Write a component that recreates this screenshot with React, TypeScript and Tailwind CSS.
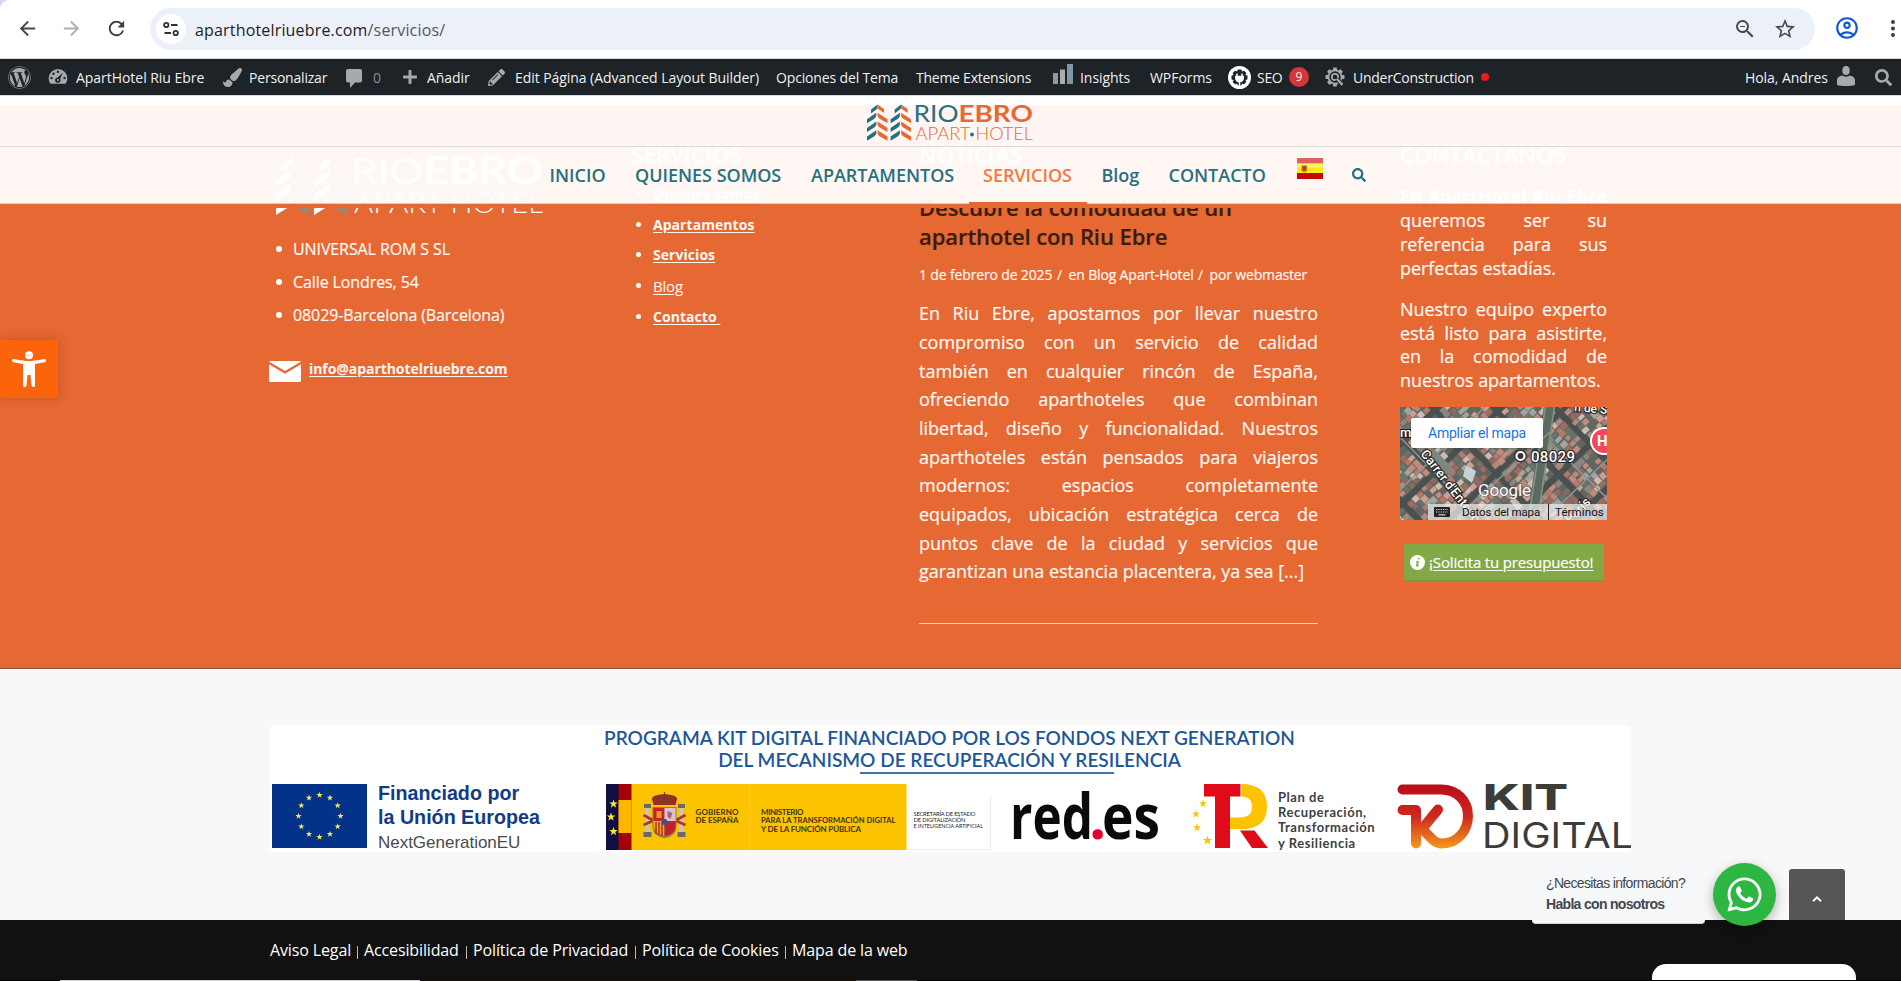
import React from "react";
import { MdArrowBack, MdArrowForward, MdRefresh, MdStarBorder, MdZoomOut, MdOutlineAccountCircle } from "react-icons/md";
import { FaWordpress, FaPaintBrush, FaPlus, FaPencilAlt, FaSearch, FaWhatsapp } from "react-icons/fa";

const SANS = "font-['Open_Sans','Noto_Sans',sans-serif]";

function starPoints(cx: number, cy: number, r: number) {
  return Array.from({ length: 10 }, (_, i) => {
    const a = -Math.PI / 2 + (i * Math.PI) / 5;
    const k = i % 2 ? r * 0.4 : r;
    return `${(cx + k * Math.cos(a)).toFixed(2)},${(cy + k * Math.sin(a)).toFixed(2)}`;
  }).join(" ");
}

function BrowserBar() {
  return (
    <div className="h-[59px] shrink-0 bg-[#cfdcfb]">
      <div className="flex h-full items-start rounded-tl-[9px] border-b border-[#d5d9de] bg-white pt-2 font-['Noto_Sans','Open_Sans',sans-serif]">
        <div className="flex h-[41px] shrink-0 items-center text-[#45484b]">
          <MdArrowBack className="ml-[16px] size-[23px]" />
          <MdArrowForward className="ml-[21px] size-[23px] text-[#aeb1b4]" />
          <MdRefresh className="ml-[22px] size-[23px] text-[#3c3f42]" />
        </div>
        <div className="ml-[22px] flex h-[42px] w-[1665px] shrink-0 items-center rounded-full bg-[#ecf0f9] pl-[6px]">
          <span className="flex size-[30px] items-center justify-center rounded-full bg-white">
            <svg width="18" height="18" viewBox="0 0 18 18" fill="none" stroke="#2f3235" strokeWidth="1.8">
              <circle cx="4.3" cy="5" r="2.2" />
              <path d="M9 5h6.500M2.500 13H9" />
              <circle cx="13.700" cy="13" r="2.200" />
            </svg>
          </span>
          <span className="mt-[1px] ml-[9px] font-['Open_Sans'] text-[16px] tracking-[0.17px] text-[#1f2124]">
            aparthotelriuebre.com<span className="text-[#53565a]">/servicios/</span>
          </span>
          <MdZoomOut className="ml-auto size-[24px] text-[#45484b]" />
          <MdStarBorder className="mr-[18px] ml-[16px] size-[24px] text-[#45484b]" />
        </div>
        <MdOutlineAccountCircle className="mt-[7px] ml-[19px] size-[26px] shrink-0 text-[#0b57d0]" />
        <svg className="mt-[8px] ml-[25px] shrink-0" width="16" height="26" viewBox="0 0 16 26" fill="#3c3f42">
          <circle cx="8" cy="6" r="2" /><circle cx="8" cy="12.500" r="2" /><circle cx="8" cy="19" r="2" />
        </svg>
      </div>
    </div>
  );
}

function Gauge() {
  return (
    <svg width="20" height="18" viewBox="0 0 20 18" className="shrink-0">
      <path d="M10 1a9.300 9.300 0 0 0-9.300 9.300c0 2 .6 3.900 1.700 5.400h15.200a9.300 9.300 0 0 0 1.700-5.400A9.300 9.300 0 0 0 10 1z" fill="#a7aaad" />
      <g fill="#1d2327">
        <circle cx="10" cy="3.800" r="1.200" /><circle cx="5.500" cy="5.700" r="1.200" /><circle cx="3.500" cy="10" r="1.200" /><circle cx="16.500" cy="10" r="1.200" />
        <path d="M15 4.500l-3.300 6.900a2.300 2.300 0 1 1-2.500-1.500z" />
        <circle cx="10" cy="12" r="2.600" />
      </g>
      <circle cx="10" cy="12" r="1.100" fill="#a7aaad" />
    </svg>
  );
}

function Gear({ color, size }: { color: string; size: number }) {
  return (
    <svg width={size} height={size} viewBox="0 0 20 20" className="shrink-0">
      <g fill={color}>
        {[0, 45, 90, 135].map((r) => <rect key={r} x="8" y="0.500" width="4" height="19" rx="0.800" transform={`rotate(${r} 10 10)`} />)}
        <circle cx="10" cy="10" r="7.400" />
      </g>
      <circle cx="10" cy="10" r="5.700" fill="#1d2327" />
      <circle cx="10" cy="10" r="3.200" fill="none" stroke={color} strokeWidth="1.700" />
      <path d="M12 12l5.500 5.500" stroke="#1d2327" strokeWidth="4.500" />
      <path d="M12 12l5.500 5.800" stroke={color} strokeWidth="2.400" />
    </svg>
  );
}

function AdminBar() {
  return (
    <div className={`flex h-[37px] shrink-0 items-center border-b border-[#d9dadd] bg-[#1d2327] text-[14px] tracking-[-0.06px] whitespace-nowrap text-[#f0f0f1] ${SANS}`}>
      <FaWordpress className="ml-[8px] size-[23px] text-[#a7aaad]" />
      <span className="mr-[8px] ml-[17px] flex w-[20px]"><Gauge /></span>
      <span className="w-[147px] tracking-[-0.04px]">ApartHotel Riu Ebre</span>
      <FaPaintBrush className="mr-[7px] size-[19px] text-[#a7aaad]" />
      <span className="w-[97px] tracking-[-0.2px]">Personalizar</span>
      <svg width="16" height="19" viewBox="0 0 16 19" fill="#a7aaad" className="mt-[2px]"><path d="M2 0h12a2 2 0 0 1 2 2v9.500a2 2 0 0 1-2 2H9L4 19v-5.500H2a2 2 0 0 1-2-2V2a2 2 0 0 1 2-2z" /></svg>
      <span className="ml-[11px] w-[29px] text-[#8c8f94]">0</span>
      <FaPlus className="mr-[9px] size-[16px] text-[#a7aaad]" />
      <span className="w-[61px]">Añadir</span>
      <span className="flex w-[27px]"><FaPencilAlt className="size-[17px] text-[#a7aaad]" /></span>
      <span className="w-[261px]">Edit Página (Advanced Layout Builder)</span>
      <span className="w-[140px] tracking-[-0.15px]">Opciones del Tema</span>
      <span className="w-[137px] tracking-[-0.25px]">Theme Extensions</span>
      <svg className="mr-[7px] -mt-[6px]" width="20" height="20" viewBox="0 0 20 20">
        <path fill="#8f9aa0" d="M0 9h5v11H0z" /><path fill="#a9aeac" d="M7 5.500h5V20H7z" /><path fill="#7f98a5" d="M14 0h6v20h-6z" />
      </svg>
      <span className="w-[70px]">Insights</span>
      <span className="w-[78px]">WPForms</span>
      <svg className="mr-[6px]" width="23" height="23" viewBox="0 0 23 23">
        <circle cx="11.500" cy="11.500" r="11.500" fill="#fff" />
        <g fill="#1d2327">
          {[0, 45, 90, 135].map((r) => <rect key={r} x="9.300" y="3.500" width="4.400" height="16" rx="1" transform={`rotate(${r} 11.500 11.500)`} />)}
          <circle cx="11.500" cy="11.500" r="6.600" />
        </g>
        <path d="M9 7.500v3M14 7.500v3M7.800 10.500h7.400v1.500a3.700 3.700 0 0 1-7.400 0zM11.500 15v5" stroke="#fff" strokeWidth="1.500" fill="#fff" />
      </svg>
      <span className="w-[32px] tracking-[-0.3px]">SEO</span>
      <span className="mr-[16px] flex size-[20px] items-center justify-center rounded-full bg-[#d63638] text-[12px]">9</span>
      <Gear color="#a7aaad" size={20} />
      <span className="ml-[8px] w-[128px] tracking-[-0.25px]">UnderConstruction</span>
      <span className="size-[8px] rounded-full bg-[#ee1c1c]" />
      <span className="ml-auto w-[92px]">Hola, Andres</span>
      <svg className="-mt-[2px]" width="18" height="20" viewBox="0 0 18 20" fill="#a7aaad">
        <ellipse cx="9" cy="4.500" rx="3.700" ry="4.500" /><path d="M0 19v-4.500C0 11.500 2.500 10 5.500 9.500 6.500 11 11.500 11 12.500 9.500c3 .5 5.500 2 5.500 5V19c-4 1.300-14 1.300-18 0z" />
      </svg>
      <FaSearch className="mr-[9px] ml-[20px] size-[17px] text-[#a7aaad]" />
    </div>
  );
}

function Chevrons({ x, left, right }: { x: number; left: string; right: string }) {
  return (
    <g transform={`translate(${x} 0)`}>
      <path fill={left} d="M4 5.500L10.500 .5V4.500L4 9.500z" />
      <path fill={right} d="M10.500 .5L17 5V9L10.500 4.500z" />
      {[0, 1, 2].map((k) => (
        <g key={k} transform={`translate(0 ${10 + k * 8.700})`}>
          <path fill={left} d="M0 5.200L9.300 -1.200L9.300 2Q9 3.500 7 5L0 9.300z" />
          <path fill={right} d="M10.500 -1.200L20.500 5.200V9.300L13 5Q10.500 3.500 10.500 1.500z" />
        </g>
      ))}
    </g>
  );
}

function Logo({ width, white }: { width: number; white?: boolean }) {
  const teal = white ? "#fff" : "#28707f";
  const orange = white ? "#fff" : "#e66833";
  const side = white ? "#a08474" : "#e66833";
  return (
    <svg width={width} height={width / 4.486} viewBox="0 0 166 37" fontFamily="Lato, sans-serif" className="block overflow-visible">
      <Chevrons x={0} left={teal} right={side} />
      <Chevrons x={23.600} left={teal} right={side} />
      <text x="46.500" y="17.600" fontSize="23.300" fill={teal} textLength="45" lengthAdjust="spacingAndGlyphs">RIO</text>
      <text x="91.500" y="17.600" fontSize="23.300" fontWeight="700" fill={orange} textLength="74.500" lengthAdjust="spacingAndGlyphs">EBRO</text>
      <text x="48.500" y="35.700" fontSize="16.700" fontWeight="300" fill={orange} textLength="55" lengthAdjust="spacingAndGlyphs">APART</text>
      <circle cx="105" cy="30.500" r="1.900" fill={white ? "#fff" : "#28707f"} />
      <text x="108.500" y="35.700" fontSize="16.700" fontWeight="300" fill={orange} textLength="57.500" lengthAdjust="spacingAndGlyphs">HOTEL</text>
    </svg>
  );
}

function SpainFlag() {
  return (
    <svg width="26" height="21" viewBox="0 0 26 21">
      <rect width="26" height="21" rx="1" fill="#c33" />
      <rect x="0" y="0" width="26" height="5.500" fill="#e0605c" />
      <rect x="0" y="5.500" width="26" height="9.500" fill="#fdea1c" />
      <rect x="0" y="5.500" width="26" height="4" fill="#fdf06a" />
      <rect x="0" y="15" width="26" height="6" fill="#c60808" />
      <path d="M4.500 7.500h5.500v5.500l-2.700 1.300-2.800-1.300z" fill="#c8701c" />
      <path d="M6 8.500h2.500v3.500H6z" fill="#b8302a" />
    </svg>
  );
}

function Header() {
  return (
    <header className={`absolute inset-x-0 top-0 z-10 ${SANS}`}>
      <div className="bg-[rgba(255,255,255,0.945)]">
        <div className="h-[9px] bg-white" />
        <div className="flex h-[42px] justify-center border-b border-[#e3dbd8] bg-[#fff6f3]">
          <div className="-mt-[1px] -ml-px"><Logo width={166} /></div>
        </div>
        <nav className="flex h-[57px] items-center border-b border-[#dccdc6] pl-[549.500px] text-[18px] font-semibold tracking-[-0.02px] whitespace-nowrap text-[#28707f]">
          <span className="w-[85.500px]">INICIO</span>
          <span className="w-[176px]">QUIENES SOMOS</span>
          <span className="w-[172px]">APARTAMENTOS</span>
          <span className="w-[118.500px] text-[#f5793f]">SERVICIOS</span>
          <span className="w-[67px]">Blog</span>
          <span className="w-[128px]">CONTACTO</span>
          <span className="-mt-[14px] w-[55px]"><SpainFlag /></span>
          <FaSearch className="size-[14px]" />
        </nav>
      </div>
      <div className="h-[4px] bg-[#e66833]" />
      <div className="absolute bottom-[4px] left-[969px] h-[2px] w-[118px] bg-[#e66833]" />
    </header>
  );
}

function SatelliteMap() {
  let s = 7;
  const rnd = () => { s = (s * 16807) % 2147483647; return s / 2147483647; };
  const roofs = ["#b5786a", "#c48a7a", "#a06c60", "#cf9f90", "#8e6a60", "#b08a7e", "#8c8682", "#cdbcb2", "#66756a"];
  const blocks: React.ReactNode[] = [];
  for (let i = -5; i < 6; i++) for (let j = -5; j < 6; j++) {
    const bx = i * 44, by = j * 44;
    blocks.push(<rect key={`${i}b${j}`} x={bx} y={by} width="38" height="38" fill="#626661" />);
    for (let a = 0; a < 6; a++) for (let b = 0; b < 6; b++) {
      const inner = a > 1 && a < 4 && b > 1 && b < 4;
      if (rnd() < 0.1) continue;
      blocks.push(<rect key={`${i}.${j}.${a}.${b}`} x={bx + a * 6.300 + rnd() * 1.500} y={by + b * 6.300 + rnd() * 1.500} width={4 + rnd() * 3} height={4.500 + rnd() * 2.500} fill={inner ? (rnd() < 0.5 ? "#6b7c6e" : "#a3a5a0") : roofs[Math.floor(rnd() * roofs.length)]} />);
    }
  }
  const halo = { stroke: "#222", strokeWidth: 2.200, paintOrder: "stroke" as const, fill: "#fff" };
  return (
    <svg width="207" height="113" viewBox="0 0 207 113" className="block" fontFamily="Roboto, sans-serif">
      <rect width="207" height="113" fill="#4a504f" />
      <g transform="translate(128 40) rotate(46)">{blocks}</g>
      <path d="M150 -4L132 117" stroke="#5a6c5e" strokeWidth="11" />
      <path d="M146 -4L128 117M155 -4L137 117" stroke="#8a918c" strokeWidth="1.500" />
      <path d="M-5 25L85 117M-5 88L90 -5M150 35L212 96M50 117L150 25M140 117L212 48" stroke="#8e9595" strokeWidth="1.500" />
      <path d="M32 40l22 22-8 8-20-22z" fill="#7b877f" />
      <path d="M66 58l10 6-4 12-9-7z" fill="#c6d0d6" />
      <g {...halo} fontWeight="500">
        <text x="174" y="4" fontSize="12" transform="rotate(5 174 4)">n de S</text>
        <text x="0" y="30" fontSize="13">m</text>
        <text x="20" y="47" fontSize="13" textLength="95" transform="rotate(52 20 47)">Carrer d&apos;Entença</text>
        <text x="170" y="117" fontSize="13" transform="rotate(-45 170 117)">París</text>
        <text x="131" y="55" fontSize="15" textLength="44">08029</text>
        <text x="78" y="89" fontSize="17" fontWeight="400" stroke="#555" strokeWidth="1" textLength="53">Google</text>
      </g>
      <path d="M117 42h6v7h-6z" fill="#e0332c" />
      <circle cx="120.500" cy="49" r="6.500" fill="#333" />
      <circle cx="120.500" cy="49" r="4" fill="none" stroke="#fff" strokeWidth="2.200" />
      <circle cx="204" cy="34" r="14" fill="#fff" /><circle cx="204" cy="34" r="12" fill="#f2475c" />
      <text x="197" y="39" fontSize="15" fontWeight="700" fill="#fff">H</text>
    </svg>
  );
}

function Bullets({ items, pitch, plain }: { items: string[]; pitch: "list" | "links"; plain?: string }) {
  return (
    <ul>
      {items.map((t) => (
        <li key={t} className={pitch === "list" ? "flex h-[33px] items-center" : "flex h-[30.800px] items-center"}>
          <span className={pitch === "list" ? "mr-[11px] ml-[6px] size-[6px] rounded-full bg-white" : "mr-[12px] size-[5px] rounded-full bg-white"} />
          {pitch === "list" ? (
            <span className="text-[16px] tracking-[-0.1px]">{t}</span>
          ) : (
            <a className={t === plain ? "text-[15px] tracking-[-0.2px] underline underline-offset-2" : "text-[14px] font-bold tracking-[0.05px] whitespace-pre underline underline-offset-2"}>{t}</a>
          )}
        </li>
      ))}
    </ul>
  );
}

function Footer() {
  const heading = "h-[30px] text-[22.400px] leading-[30px] font-semibold text-white";
  return (
    <section className={`flex h-[573px] shrink-0 border-b border-[#9c5333] bg-[#e66833] pl-[269px] text-[#fff8f3] [-webkit-text-stroke:0.2px] ${SANS}`}>
      <div className="w-[369px] pt-[60px]">
        <div className="ml-[7px]"><Logo width={267} white /></div>
        <div className="mt-[17px] ml-[1px]"><Bullets pitch="list" items={["UNIVERSAL ROM S SL", "Calle Londres, 54", "08029-Barcelona (Barcelona)"]} /></div>
        <div className="mt-[29px] flex">
          <svg width="32" height="21" viewBox="0 0 32 21" fill="#fff"><path d="M1.500 0h29q1 0 1.300.8L16 10 .2.800Q.5 0 1.500 0z" /><path d="M0 3.300l16 9.400 16-9.400V19q0 2-1.500 2h-29Q0 21 0 19z" /></svg>
          <a className="-mt-[3px] ml-[8px] text-[14px] font-bold tracking-[-0.06px] underline underline-offset-2 [-webkit-text-stroke:0px]">info@aparthotelriuebre.com</a>
        </div>
      </div>
      <div className="-ml-[2px] w-[284px] pt-[44px]">
        <h3 className={`${heading} -ml-[5px]`}>SERVICIOS</h3>
        <div className="mt-[8px] [-webkit-text-stroke:0px]"><Bullets pitch="links" plain="Blog" items={["Quienes somos", "Apartamentos", "Servicios", "Blog", "Contacto "]} /></div>
      </div>
      <div className="-ml-px w-[399px] pt-[44px]">
        <h3 className={heading}>NOTICIAS</h3>
        <h4 className="mt-[23px] text-[22px] leading-[28.600px] font-semibold tracking-[-0.08px] text-[#3b1c10]">Descubre la comodidad de un<br />aparthotel con Riu Ebre</h4>
        <p className="mt-[15px] flex h-[20px] text-[14px] leading-[20px] tracking-[-0.15px] whitespace-pre"><span className="w-[138px]">1 de febrero de 2025</span><span className="w-[11.500px]">/</span><span className="w-[129.500px]">en Blog Apart-Hotel</span><span className="w-[11.500px]">/</span><span>por webmaster</span></p>
        <p className="mt-[14px] text-justify text-[18px] leading-[28.670px] tracking-[-0.010px]">
          En Riu Ebre, apostamos por llevar nuestro compromiso con un servicio de calidad también en cualquier rincón de España, ofreciendo aparthoteles que combinan libertad, diseño y funcionalidad. Nuestros aparthoteles están pensados para viajeros modernos: espacios completamente equipados, ubicación estratégica cerca de puntos clave de la ciudad y servicios que garantizan una estancia placentera, ya sea [...]
        </p>
        <div className="mt-[37px] h-px bg-[#f6d5c6]" />
      </div>
      <div className="ml-[82px] w-[207px] pt-[44px]">
        <h3 className={heading}>CONTÁCTANOS</h3>
        <p className="mt-[15px] text-justify text-[18px] leading-[23.900px] tracking-[-0.05px]"><b className="text-white">En ApartHotel Riu Ebre</b> queremos ser su referencia para sus perfectas estadías.</p>
        <p className="mt-[17px] text-justify text-[18px] leading-[23.900px] tracking-[-0.05px]">Nuestro equipo experto está listo para asistirte, en la comodidad de nuestros apartamentos.</p>
        <div className="relative mt-[14px] font-['Roboto',sans-serif] [-webkit-text-stroke:0px]">
          <SatelliteMap />
          <div className="absolute top-[11px] left-[11px] flex h-[30px] w-[132px] items-center justify-center rounded-[2px] bg-white text-[14px] tracking-[-0.24px] text-[#1a73e8] shadow">Ampliar el mapa</div>
          <div className="absolute right-0 bottom-0 flex h-[16px] items-center bg-[rgba(235,235,235,0.75)] text-[11.500px] tracking-[-0.15px] whitespace-nowrap text-[#111]">
            <svg className="mx-[6px]" width="16" height="10" viewBox="0 0 16 10"><rect width="16" height="10" rx="1" fill="#222" /><path d="M2 2.500h12M2 5h12" stroke="#ddd" strokeWidth="1.200" strokeDasharray="1.300 1" /><path d="M4.500 7.800h7" stroke="#ddd" strokeWidth="1.200" /></svg>
            <span className="flex h-full w-[92px] items-center border-l border-[#c5c5c5] pl-[5px]">Datos del mapa</span>
            <span className="flex h-full w-[59px] items-center border-l border-[#222] pl-[6px] tracking-[0.1px]">Términos</span>
          </div>
        </div>
        <a className="mt-[24px] ml-[4px] flex h-[37px] w-[200px] items-center rounded-[2px] border-b border-[#74953c] bg-[#83a846] pl-[6px] text-[15px] tracking-[-0.15px] whitespace-nowrap text-white">
          <svg width="15" height="15" viewBox="0 0 14 14"><circle cx="7" cy="7" r="7" fill="#fff" /><path d="M7.600 2.500l1.300.3-.4 1.500-1.400-.3zM6 5.500h2.300L7.500 9.800h.9v1H5.500l.8-4.300H5.700z" fill="#83a846" /></svg>
          <span className="ml-[4px] underline underline-offset-2">¡Solicita tu presupuesto!</span>
        </a>
      </div>
    </section>
  );
}

function EuFlag() {
  return (
    <svg width="95" height="64" viewBox="0 0 95 64">
      <rect width="95" height="64" fill="#033289" />
      {Array.from({ length: 12 }, (_, i) => {
        const a = (i * Math.PI) / 6;
        return <polygon key={i} points={starPoints(47.500 + 21 * Math.sin(a), 32 - 21 * Math.cos(a), 3.300)} fill="#f5e85a" />;
      })}
    </svg>
  );
}

function CoatOfArms() {
  return (
    <g transform="translate(36.500 8)">
      <path d="M10 9q-2-4 3-5.500Q18 2 22 2t9 1.500q5 1.500 3 5.500l-1 4H11z" fill="#a3262c" />
      <path d="M12 12q10-3 20 0M10.500 7.500q5-4 11.500-4t11.500 4M22 0v12M16 4l1 8M28 4l-1 8" stroke="#5e4a18" strokeWidth="1.200" fill="none" />
      <path d="M10 15h24v20q0 9-12 11-12-2-12-11z" fill="#8e7a57" />
      <path d="M11 16h11v13H11z" fill="#c9202c" /><path d="M22 16h11v13H22z" fill="#dcc3cf" />
      <path d="M11 29h11v15q-11-3-11-10z" fill="#e8b21a" /><path d="M22 29h11v5q0 8-11 10z" fill="#b8232c" />
      <path d="M13.500 30v12M16.500 30v13M19.500 30v14" stroke="#b8232c" strokeWidth="1.400" />
      <path d="M14 19h5v7h-5z" fill="#d8a11e" /><path d="M25 19l5 2-2 6-3-2z" fill="#a0678c" />
      <circle cx="22" cy="30" r="3" fill="#3c518a" />
      <path d="M3 15h4v25H3zM37 15h4v25h-4z" fill="#c9c5b8" />
      <path d="M1.500 12h7v4h-7zM35.500 12h7v4h-7zM1 40h8v5H1zM35 40h8v5h-8z" fill="#6b6a68" />
      <path d="M1 23l9 5M1 33l9-4M43 23l-9 5M43 33l-9-4" stroke="#b0322c" strokeWidth="2.600" />
    </g>
  );
}

function GovernmentLogo() {
  return (
    <svg width="385" height="66" viewBox="0 0 385 66" fontFamily="Lato, sans-serif">
      <rect width="300.500" height="66" fill="#fcc400" />
      <rect width="13" height="66" fill="#101040" /><rect x="12.500" width="13" height="66" fill="#a30208" /><rect x="12.500" y="16" width="13" height="33" fill="#fcb800" />
      {[[7.500, 20], [5, 33], [7.500, 47.500]].map(([x, y]) => <polygon key={y} points={starPoints(x, y, 4.500)} fill="#f8e63c" />)}
      <CoatOfArms />
      <path d="M144 0v66" stroke="#ffcf33" strokeWidth="1" />
      <g fontSize="8" fontWeight="700" fill="#40330c" lengthAdjust="spacingAndGlyphs">
        <text x="89.500" y="30.500" textLength="43">GOBIERNO</text><text x="89.500" y="39.200" textLength="43">DE ESPAÑA</text>
        <text x="155" y="30.500" textLength="42.500">MINISTERIO</text>
        <text x="155" y="39" textLength="134.500" lengthAdjust="spacingAndGlyphs">PARA LA TRANSFORMACIÓN DIGITAL</text>
        <text x="155" y="47.800" textLength="100">Y DE LA FUNCIÓN PÚBLICA</text>
      </g>
      <g fontSize="5.800" fill="#222">
        <text x="307.500" y="32" textLength="62">SECRETARÍA DE ESTADO</text>
        <text x="307.500" y="38.200" textLength="52">DE DIGITALIZACIÓN</text>
        <text x="307.500" y="44.300" textLength="69.500" lengthAdjust="spacingAndGlyphs">E INTELIGENCIA ARTIFICIAL</text>
      </g>
      <path d="M301 65.500h83.500V12" fill="none" stroke="#ececec" />
    </svg>
  );
}

function RecoveryMark() {
  return (
    <svg width="77" height="65" viewBox="0 0 77 65">
      <path d="M49.500 0Q75 0 75 22.500 75 45 50 45H38V33.500h9Q60 33.500 60 23T49.500 12.500z" fill="#fcc400" />
      <path d="M12 0h36.500v12.500H38V64H23V12.500H12z" fill="#e10a17" />
      <path d="M48 46.500h14.500L76 64H60z" fill="#e10a17" />
      {[[11, 19.500], [4, 30], [5, 43.500], [15.500, 56.500]].map(([x, y], i) => <polygon key={y} points={starPoints(x, y, i === 3 ? 5 : 4.200)} fill="#fcc400" />)}
    </svg>
  );
}

function KitMark() {
  return (
    <svg width="77" height="66" viewBox="0 0 77 66">
      <defs><linearGradient id="kit" x1="0" y1="0" x2="0" y2="66" gradientUnits="userSpaceOnUse"><stop offset="0" stopColor="#ba0a1a" /><stop offset=".5" stopColor="#cf2a1e" /><stop offset="1" stopColor="#f6a01c" /></linearGradient></defs>
      <g fill="none" stroke="url(#kit)" strokeWidth="10" strokeLinecap="round" strokeLinejoin="round">
        <path d="M5.500 5.500H44C60 5.500 71 17 71 32S60 59.500 45 59.500Q40 59.500 36 56L25 45 41 25.500" />
        <path d="M5.500 26H19V59.500" />
      </g>
    </svg>
  );
}

function Funding() {
  return (
    <section className="h-[251px] shrink-0 bg-[#f8f8f8] pt-[56px] pl-[270px]">
      <div className="h-[127px] w-[1361px] rounded-[4px] bg-white pt-[2px]">
        <div className="pr-[2px] text-center font-['Lato',sans-serif] text-[19px] leading-[22px] font-semibold tracking-[0.02px] text-[#1c5799]">
          <p>PROGRAMA KIT DIGITAL FINANCIADO POR LOS FONDOS NEXT GENERATION</p>
          <p>DEL MECANISMO DE RECUPERACIÓN Y RESILENCIA</p>
        </div>
        <div className="mt-[1px] ml-[590px] h-[2px] w-[254px] bg-[#3f74b0]" />
        <div className="mt-[10px] flex h-[66px] items-start">
          <div className="ml-[2px]"><EuFlag /></div>
          <div className="ml-[11px] w-[228px] font-['Liberation_Sans',Arial,sans-serif] whitespace-nowrap text-[#123a85]">
            <p className="-mt-[3px] text-[19.700px] leading-[24px] font-bold">Financiado por</p>
            <p className="text-[19.700px] leading-[24px] font-bold">la Unión Europea</p>
            <p className="mt-[2px] text-[17px] leading-[24px] tracking-[-0.02px] text-[#4a4a4a]">NextGenerationEU</p>
          </div>
          <GovernmentLogo />
          <svg className="ml-[20px]" width="152" height="66" viewBox="0 0 152 66">
            <g fontFamily="Open Sans, sans-serif" fontSize="63" fontWeight="700" fill="#0a0a0a">
              <text x="-1" y="55" textLength="83" lengthAdjust="spacingAndGlyphs">red</text>
              <text x="78" y="55" fontSize="61" fill="#e4032e" textLength="17">.</text>
              <text x="91" y="55" textLength="58" lengthAdjust="spacingAndGlyphs">es</text>
            </g>
          </svg>
          <div className="ml-[29px]"><RecoveryMark /></div>
          <div className="mt-[6px] ml-[9px] w-[119px] font-['Lato',sans-serif] text-[13px] leading-[15.200px] font-bold tracking-[0.55px] whitespace-nowrap text-[#3f3f3f]">
            <p>Plan de</p><p>Recuperación,</p><p>Transformación</p><p>y Resiliencia</p>
          </div>
          <KitMark />
          <svg className="ml-[11px]" width="146" height="66" viewBox="0 0 146 66" fill="#3c3c3b" fontFamily="Inter, sans-serif">
            <text x="-2" y="26" fontSize="35" fontWeight="800" textLength="85" lengthAdjust="spacingAndGlyphs">KIT</text>
            <text x="-3" y="64" fontSize="35" fontWeight="400" textLength="151" lengthAdjust="spacingAndGlyphs">DIGITAL</text>
          </svg>
        </div>
      </div>
    </section>
  );
}

function Legal() {
  return (
    <div className={`flex h-[61px] shrink-0 flex-col border-b border-black bg-[#111] text-[16px] tracking-[-0.130px] whitespace-nowrap text-white ${SANS}`}>
      <div className="flex h-[60px] items-center pl-[270px]">
        <span className="w-[87px]">Aviso Legal</span><i className="mt-[5px] mr-[6px] h-[13px] w-px bg-[#bbb]" />
        <span className="w-[102px]">Accesibilidad</span><i className="mt-[5px] mr-[6px] h-[13px] w-px bg-[#bbb]" />
        <span className="w-[162px]">Política de Privacidad</span><i className="mt-[5px] mr-[6px] h-[13px] w-px bg-[#bbb]" />
        <span className="w-[143px]">Política de Cookies</span><i className="mt-[5px] mr-[6px] h-[13px] w-px bg-[#bbb]" />
        <span>Mapa de la web</span>
      </div>
    </div>
  );
}

function Floating() {
  return (
    <>
      <div className="absolute top-[340px] left-0 z-20 flex h-[58px] w-[58px] items-center justify-center bg-[#fb640a] shadow-[0_0_10px_rgba(90,40,20,0.3)]">
        <svg width="34" height="36" viewBox="0 0 34 36" fill="#fff"><circle cx="17" cy="4.200" r="4" /><path d="M1.500 8Q13 10 17 10t15.500-2q1.500 0 1.500 1.500T32.700 11.200L23 13v21.500Q23 36 21.500 36T19.500 34.500L18.500 24h-3l-1 10.500Q14.500 36 12.700 36T11 34.500V13L1.300 11.200Q0 11 0 9.500T1.500 8z" /></svg>
      </div>
      <div className="absolute top-[865px] left-[1532px] flex h-[59px] w-[173px] flex-col justify-center rounded-[4px] border-b border-[#d5d8da] bg-[#f5f7f9] pl-[14px] font-['Liberation_Sans',Arial,sans-serif] text-[14px] leading-[21px] whitespace-nowrap text-[#43474e]">
        <p className="tracking-[-0.650px]">¿Necesitas información?</p>
        <p className="font-bold tracking-[-0.680px]">Habla con nosotros</p>
      </div>
      <div className="absolute top-[863px] left-[1713px] flex size-[63px] items-center justify-center rounded-full bg-[#2db742] shadow-[0_4px_12px_rgba(0,0,0,0.3)]"><FaWhatsapp className="size-[39px] text-white" /></div>
      <div className="absolute top-[869px] left-[1789px] flex h-[51px] w-[56px] items-center justify-center rounded-t-[3px] bg-[#555] pt-[8px]">
        <svg width="10" height="6" viewBox="0 0 10 6" fill="none" stroke="#fff" strokeWidth="1.900"><path d="M1 5.200L5 1.400 9 5.200" /></svg>
      </div>
      <div className="absolute top-[964px] left-[1652px] h-[16px] w-[204px] rounded-t-[14px] bg-white" />
      <div className="absolute top-[980px] left-[60px] h-px w-[360px] bg-[#d2cfce]" />
      <div className="absolute top-[980px] left-[420px] h-px w-[436px] bg-[#1f1006]" />
      <div className="absolute top-[980px] left-[856px] h-px w-[61px] bg-[#555]" />
    </>
  );
}

export default function App() {
  return (
    <div className="relative flex h-[981px] w-full flex-col overflow-hidden bg-black">
      <BrowserBar />
      <AdminBar />
      <div className="relative flex flex-col">
        <Header />
        <Footer />
        <Funding />
        <Legal />
      </div>
      <Floating />
    </div>
  );
}
